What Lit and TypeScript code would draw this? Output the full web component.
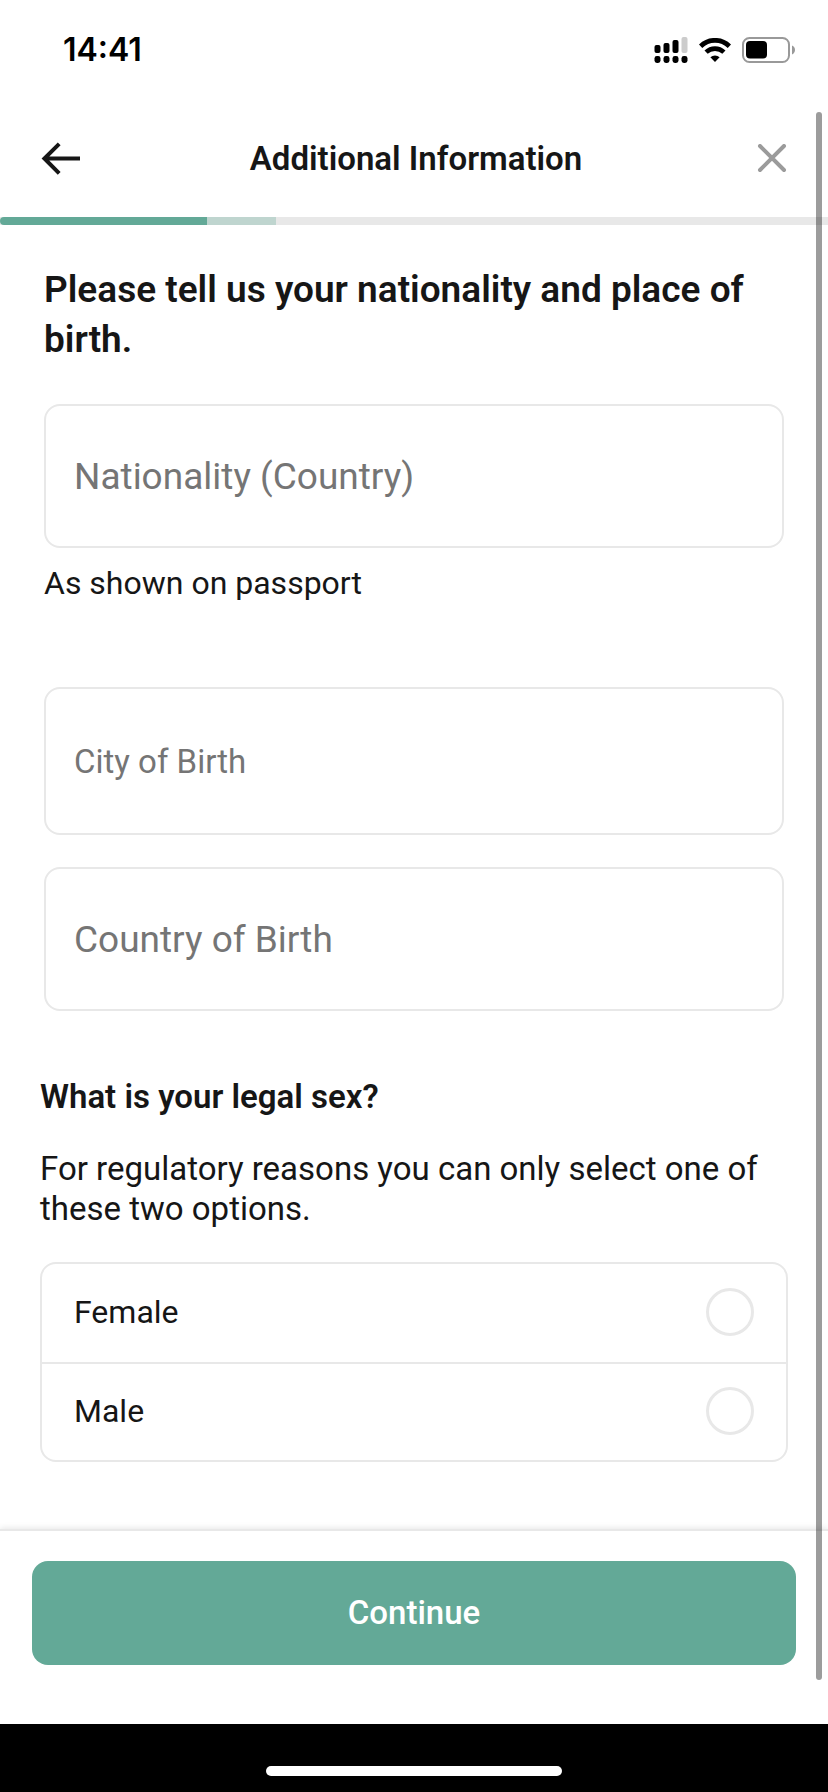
import { LitElement, html, css } from "lit";
import { customElement, state } from "lit/decorators.js";

@customElement("status-bar")
class StatusBar extends LitElement {
  static styles = css`
    :host {
      display: flex;
      align-items: center;
      justify-content: space-between;
      height: 100px;
      padding: 0 33px 0 63px;
      color: #000;
    }
    .time {
      font-family: Inter, sans-serif;
      font-size: 32px;
      line-height: 40px;
      font-weight: 600;
    }
    .icons {
      display: flex;
      align-items: center;
      gap: 11px;
    }
    svg {
      display: block;
    }
  `;

  render() {
    return html`
      <span class="time">14:41</span>
      <div class="icons">
        <svg width="34" height="26" viewBox="0 0 34 26" aria-label="Signal">
          <rect x="0.5" y="8" width="6" height="8" rx="2" />
          <rect x="9.5" y="6" width="6" height="10" rx="2" />
          <rect x="18.5" y="3" width="6" height="13" rx="2" />
          <rect x="27.5" y="0" width="6" height="16" rx="2" fill="#ccc" />
          <rect x="0.5" y="19" width="6" height="7" rx="2.4" />
          <rect x="9.5" y="19" width="6" height="7" rx="2.4" />
          <rect x="18.5" y="19" width="6" height="7" rx="2.4" />
          <rect x="27.5" y="19" width="6" height="7" rx="2.4" />
        </svg>
        <svg width="32" height="24" viewBox="0 0 32 24" aria-label="Wi-Fi">
          <path d="M1.6 8.2a20.6 20.6 0 0 1 28.8 0" fill="none" stroke="#000" stroke-width="4.8" />
          <path d="M7.1 14.2a12.8 12.8 0 0 1 17.8 0" fill="none" stroke="#000" stroke-width="4.6" />
          <path d="M11.4 19.2a6.8 6.8 0 0 1 9.2 0L16 24z" />
        </svg>
        <svg width="53" height="26" viewBox="0 0 53 26" aria-label="Battery">
          <rect x="1" y="1" width="46" height="24" rx="6.5" fill="none" stroke="#999" stroke-width="2" />
          <rect x="4" y="4" width="21" height="17.5" rx="4" />
          <path d="M50 8.6c4 1.6 4 7.2 0 8.8z" fill="#999" />
        </svg>
      </div>
    `;
  }
}

@customElement("app-root")
class AppRoot extends LitElement {
  @state() private sex = "";

  private progress = 25;
  private upcoming = 8.33;

  static styles = css`
    :host {
      display: flex;
      flex-direction: column;
      position: relative;
      min-height: 100vh;
      background: #fff;
      color: #161616;
      font-family: Roboto, sans-serif;
      font-size: 33px;
      line-height: 40px;
    }
    * {
      box-sizing: border-box;
    }
    h1,
    h2,
    p,
    fieldset {
      margin: 0;
      padding: 0;
      border: 0;
      min-width: 0;
    }
    input,
    button {
      font: inherit;
      color: inherit;
      margin: 0;
    }
    .header {
      display: grid;
      grid-template-columns: 48px 1fr 48px;
      align-items: center;
      height: 117px;
      padding: 0 32px 0 36px;
    }
    .title {
      font-size: 33px;
      line-height: 40px;
      font-weight: 600;
      text-align: center;
    }
    .icon-button {
      display: grid;
      place-items: center;
      width: 48px;
      height: 48px;
      padding: 0;
      border: 0;
      background: none;
      cursor: pointer;
    }
    .progress {
      display: flex;
      height: 8px;
      background: #e8e8e8;
    }
    .done {
      background: #63a997;
      border-radius: 4px 0 0 4px;
    }
    .upcoming {
      background: #bfd5cf;
    }
    .form {
      flex: 1;
      display: flex;
      flex-direction: column;
      padding: 40px 40px 64px;
    }
    .birth {
      display: flex;
      flex-direction: column;
      padding: 0 4px;
    }
    .heading {
      font-size: 37px;
      line-height: 50px;
      font-weight: 600;
      margin-bottom: 39px;
    }
    .field {
      width: 100%;
      height: 144px;
      padding: 0 28px;
      border: 2px solid #e8e8e8;
      border-radius: 16px;
      background: #fff;
      font-size: 37px;
      outline-color: #63a997;
    }
    .field::placeholder {
      color: #757575;
      opacity: 1;
    }
    .field.compact {
      height: 148px;
      font-size: 33px;
    }
    .hint {
      margin: 15px 0 84px;
      font-size: 32px;
    }
    .stack {
      display: grid;
      gap: 32px;
    }
    .question {
      margin-top: 66px;
      font-size: 33px;
      line-height: 40px;
      font-weight: 600;
    }
    .note {
      margin: 32px 0 33px;
    }
    .options {
      border: 2px solid #e8e8e8;
      border-radius: 16px;
      font-size: 32px;
    }
    .option {
      display: flex;
      align-items: center;
      justify-content: space-between;
      height: 98px;
      padding: 0 32px 2px;
      cursor: pointer;
    }
    .option + .option {
      border-top: 2px solid #e8e8e8;
    }
    .radio {
      appearance: none;
      width: 48px;
      height: 48px;
      border: 3px solid #e8e8e8;
      border-radius: 50%;
      background: #fff;
      cursor: pointer;
    }
    .radio:checked {
      border: 14px solid #63a997;
    }
    .footer {
      padding: 30px 32px 59px;
      border-top: 2px solid #e8e8e8;
      background: #fff;
      box-shadow: 0 -1px 6px rgba(0, 0, 0, 0.1);
    }
    .continue {
      display: block;
      width: 100%;
      height: 104px;
      border: 0;
      border-radius: 16px;
      background: #63a997;
      color: #fff;
      font-weight: 500;
      cursor: pointer;
    }
    .home {
      display: flex;
      justify-content: center;
      align-items: flex-end;
      height: 68px;
      padding-bottom: 16px;
      background: #000;
    }
    .pill {
      width: 296px;
      height: 10px;
      border-radius: 5px;
      background: #fff;
    }
    .scrollbar {
      position: absolute;
      top: 112px;
      right: 6px;
      bottom: 112px;
      width: 6px;
      border-radius: 3px;
      background: rgba(0, 0, 0, 0.39);
      pointer-events: none;
    }
  `;

  private option(value: string) {
    return html`
      <label class="option">
        <span>${value}</span>
        <input
          class="radio"
          type="radio"
          name="sex"
          .value=${value}
          .checked=${this.sex === value}
          @change=${() => (this.sex = value)}
        />
      </label>
    `;
  }

  render() {
    return html`
      <status-bar></status-bar>
      <header class="header">
        <button class="icon-button" aria-label="Back">
          <svg width="40" height="34" viewBox="0 0 40 34" fill="none" stroke="#161616" stroke-width="4">
            <path d="M40 16.5H4M19.2 1.8L4.4 16.5L19.2 31.4" />
          </svg>
        </button>
        <h1 class="title">Additional Information</h1>
        <button class="icon-button" aria-label="Close">
          <svg width="30" height="30" viewBox="0 0 30 30" stroke="#9b9b9b" stroke-width="4" stroke-linecap="round">
            <path d="M3 2L27 26M27 2L3 26" />
          </svg>
        </button>
      </header>
      <div class="progress" role="progressbar" aria-label="Progress" aria-valuenow=${this.progress}>
        <div class="done" style="width:${this.progress}%"></div>
        <div class="upcoming" style="width:${this.upcoming}%"></div>
      </div>
      <main class="form">
        <section class="birth">
          <h2 class="heading">Please tell us your nationality and place of birth.</h2>
          <input class="field" type="text" aria-label="Nationality (Country)" aria-describedby="hint" placeholder="Nationality (Country)" />
          <p class="hint" id="hint">As shown on passport</p>
          <div class="stack">
            <input class="field compact" type="text" aria-label="City of Birth" placeholder="City of Birth" />
            <input class="field" type="text" aria-label="Country of Birth" placeholder="Country of Birth" />
          </div>
        </section>
        <h2 class="question" id="question">What is your legal sex?</h2>
        <p class="note">For regulatory reasons you can only select one of these two options.</p>
        <fieldset class="options" aria-labelledby="question">
          ${this.option("Female")} ${this.option("Male")}
        </fieldset>
      </main>
      <footer class="footer">
        <button class="continue">Continue</button>
      </footer>
      <div class="home"><div class="pill"></div></div>
      <div class="scrollbar"></div>
    `;
  }
}
